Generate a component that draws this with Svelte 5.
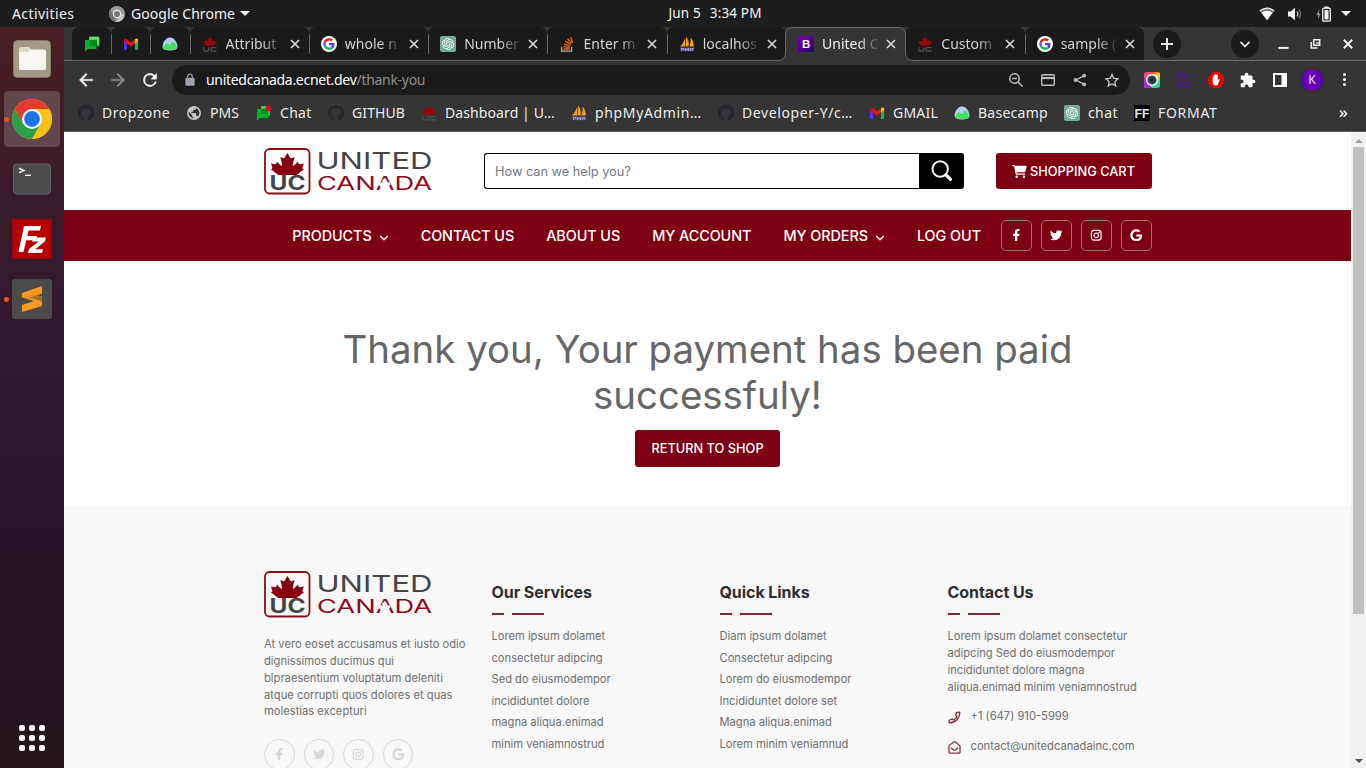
<script>
  const github =
    '<path fill="#24262f" d="M8 0C3.58 0 0 3.58 0 8c0 3.54 2.29 6.53 5.47 7.59.4.07.55-.17.55-.38 0-.19-.01-.82-.01-1.49-2.01.37-2.53-.49-2.69-.94-.09-.23-.48-.94-.82-1.13-.28-.15-.68-.52-.01-.53.63-.01 1.08.58 1.23.82.72 1.21 1.87.87 2.33.66.07-.52.28-.87.51-1.07-1.78-.2-3.64-.89-3.64-3.95 0-.87.31-1.59.82-2.15-.08-.2-.36-1.02.08-2.12 0 0 .67-.21 2.2.82.64-.18 1.32-.27 2-.27s1.36.09 2 .27c1.53-1.04 2.2-.82 2.2-.82.44 1.1.16 1.92.08 2.12.51.56.82 1.27.82 2.15 0 3.07-1.87 3.75-3.65 3.95.29.25.54.73.54 1.48 0 1.07-.01 1.93-.01 2.2 0 .21.15.46.55.38A8.01 8.01 0 0 0 16 8c0-4.42-3.58-8-8-8z"/>';
  const leaf =
    '256,0 298,80 316,85 356,62 328,192 346,202 401,139 416,172 429,179 487,167 467,234 472,252 489,259 384,352 128,352 23,259 40,252 45,234 25,167 83,179 96,172 111,139 166,202 184,192 156,62 196,85 214,80';

  // Each entry: [viewBox, svg markup]
  const icons = {
    chat: ['0 0 16 16', '<path fill="#35c759" d="M5 .8h10.2v9.500h-2V4H5z"/><path fill="#5be07a" d="M6 .8h9.200v7.700H13V3.600H6z"/><path fill="#00b32c" d="M1 4h11.500v9H4l-3 2.600z"/><path fill="#078a22" d="M5 4h7.500v6H5z"/>'],
    chatdot: ['0 0 16 16', '<path fill="#35c759" d="M5 1h9v9.500H5z"/><path fill="#00b32c" d="M1 4h11.500v9H4l-3 2.600z"/><path fill="#078a22" d="M5 4h6.500v5H5z"/><circle cx="12.800" cy="3.200" r="2.900" fill="#e40010"/>'],
    gmail: ['0 0 16 16', '<path fill="#5b2df5" d="M.9 4.200 4 6.500V14H2Q.9 14 .9 12.900z"/><path fill="#12b84a" d="M12 6.500 15.100 4.200v8.700Q15.100 14 14 14h-2z"/><path fill="#f01414" d="m4 3.300 4 3.100 4-3.100v4.200l-4 3-4-3z"/><path fill="#b40f16" d="M.9 4.200C.9 2.200 2.700 1.900 4 3.300v4.200L.9 5.200z"/><path fill="#ffd000" d="M12 3.300c1.300-1.400 3.100-1 3.100.9v1L12 7.500z"/>'],
    basecamp: ['0 0 16 16', '<path fill="#b8cdf5" d="M8 1.500c5 0 7.500 6.300 7.500 9.500 0 2.500-4 3.500-7.500 3.500S.5 13.500.5 11C.5 7.800 3 1.500 8 1.500z"/><path fill="#45e05a" d="M1 11.300c1.400-1.700 2.500-4.300 4-4.300 1.300 0 1.700 2 2.600 2 1.300 0 1.700-3.500 3.500-3.500 1.900 0 3.200 3.700 3.900 5.700-.2 2-3.700 2.800-7 2.800s-6.800-.7-7-2.700z"/>'],
    uc: ['0 0 16 16', `<g transform="translate(1 .5) scale(.0273 .026)"><polygon fill="#9d0408" points="${leaf}"/></g><path d="M1.700 11v3.200q0 .8.800.8h3.300q.8 0 .8-.8V11m8 .6H9.800q-.9 0-.9.800v1.800q0 .8.900.8h4.800" fill="none" stroke="#4c4c4c" stroke-width="1.300"/>`],
    google: ['0 0 64 64', '<circle cx="32" cy="32" r="32" fill="#fff"/><g transform="translate(9 9) scale(.96)"><path fill="#f01616" d="M24 9.500c3.500 0 6.700 1.200 9.200 3.600l6.900-6.900C35.900 2.400 30.500 0 24 0 14.600 0 6.500 5.400 2.600 13.200l8 6.200C12.400 13.700 17.700 9.500 24 9.500z"/><path fill="#5537ef" d="M47 24.600c0-1.600-.2-3.100-.4-4.600H24v9h12.900c-.6 3-2.300 5.500-4.800 7.200l7.700 6C44.400 38 47 31.900 47 24.600z"/><path fill="#8a2df0" d="M10.500 28.600a14.600 14.600 0 0 1 0-9.200l-8-6.200a24 24 0 0 0 0 21.600z"/><path fill="#09b94a" d="M24 48c6.500 0 11.900-2.100 15.900-5.800l-7.700-6c-2.200 1.500-4.900 2.300-8.200 2.300-6.300 0-11.600-4.200-13.500-9.900l-8 6.200C6.500 42.600 14.600 48 24 48z"/></g>'],
    openai: ['0 0 32 32', '<rect width="32" height="32" rx="4" fill="#74aa9c"/><g transform="translate(4 4)" fill="#fff"><path d="M22.2819 9.8211a5.9847 5.9847 0 0 0-.5157-4.9108 6.0462 6.0462 0 0 0-6.5098-2.9A6.0651 6.0651 0 0 0 4.9807 4.1818a5.9847 5.9847 0 0 0-3.9977 2.9 6.0462 6.0462 0 0 0 .7427 7.0966 5.98 5.98 0 0 0 .511 4.9107 6.051 6.051 0 0 0 6.5146 2.9001A5.9847 5.9847 0 0 0 13.2599 24a6.0557 6.0557 0 0 0 5.7718-4.2058 5.9894 5.9894 0 0 0 3.9977-2.9001 6.0557 6.0557 0 0 0-.7475-7.0729zm-9.022 12.6081a4.4755 4.4755 0 0 1-2.8764-1.0408l.1419-.0804 4.7783-2.7582a.7948.7948 0 0 0 .3927-.6813v-6.7369l2.02 1.1686a.071.071 0 0 1 .038.052v5.5826a4.504 4.504 0 0 1-4.4945 4.4944zm-9.6607-4.1254a4.4708 4.4708 0 0 1-.5346-3.0137l.142.0852 4.783 2.7582a.7712.7712 0 0 0 .7806 0l5.8428-3.3685v2.3324a.0804.0804 0 0 1-.0332.0615L9.74 19.9502a4.4992 4.4992 0 0 1-6.1408-1.6464zM2.3408 7.8956a4.485 4.485 0 0 1 2.3655-1.9728V11.6a.7664.7664 0 0 0 .3879.6765l5.8144 3.3543-2.0201 1.1685a.0757.0757 0 0 1-.071 0l-4.8303-2.7865A4.504 4.504 0 0 1 2.3408 7.872zm16.5963 3.8558L13.1038 8.364 15.1192 7.2a.0757.0757 0 0 1 .071 0l4.8303 2.7913a4.4944 4.4944 0 0 1-.6765 8.1042v-5.6772a.79.79 0 0 0-.407-.667zm2.0107-3.0231l-.142-.0852-4.7735-2.7818a.7759.7759 0 0 0-.7854 0L9.409 9.2297V6.8974a.0662.0662 0 0 1 .0284-.0615l4.8303-2.7866a4.4992 4.4992 0 0 1 6.6802 4.66zM8.3065 12.863l-2.02-1.1638a.0804.0804 0 0 1-.038-.0567V6.0742a4.4992 4.4992 0 0 1 7.3757-3.4537l-.142.0805L8.704 5.459a.7948.7948 0 0 0-.3927.6813zm1.0976-2.3654l2.602-1.4998 2.6069 1.4998v2.9994l-2.5974 1.4997-2.6067-1.4997Z"/></g>'],
    stack: ['0 0 16 16', '<path d="M2.600 10.800v4.400h10v-4.400" fill="none" stroke="#a9a9ad" stroke-width="1.300"/><path d="M4.500 13h6.200M4.500 10.700l6.200.6M5 8.100l6 1.700M6.300 5.200l5.400 3.100M8.600 2.700l4 4.700M11.700 1l1.900 5.900" stroke="#ef6a00" stroke-width="1.350"/>'],
    pma: ['0 0 16 16', '<path d="M6.300 1.500v9H.8C3.200 8.700 5 5.500 6.300 1.500z" fill="#e8a33a"/><path d="M7.300.5c2.200 3 2.900 6.600 2.300 10H6.800z" fill="#ff9a00"/><path d="M11.600 1.500c2.300 2.500 3.200 6 3.200 9h-4.300c1-3 1.500-5.700 1.100-9z" fill="#f6a51f"/><path d="M.5 11.500h15l-1.500 3.800H1.900z" fill="#57528c"/><path d="M2.500 15v-2.500h2.200v1.300M6.500 15v-2.600l1.500 1.600 1.500-1.600V15m2-0v-2.500h2.300V15" stroke="#b9b3d8" stroke-width=".8" fill="none"/>'],
    bootstrap: ['0 0 16 16', '<defs><linearGradient id="bsg" x2="1" y2="1"><stop stop-color="#7b00b5"/><stop offset="1" stop-color="#2a0060"/></linearGradient></defs><rect width="16" height="16" rx="1.500" fill="url(#bsg)"/><text x="8.100" y="12.200" text-anchor="middle" font-family="Liberation Sans, sans-serif" font-weight="700" font-size="11.500" fill="#fff">B</text>'],
    github: ['0 0 16 16', github],
    globe: ['0 0 24 24', '<path fill="#c3c5cb" d="M12 1.500A10.500 10.500 0 1 0 22.500 12 10.500 10.500 0 0 0 12 1.500zM11 19.800A7.900 7.900 0 0 1 4.200 10.300L9 15v1a2 2 0 0 0 2 2zm6.900-2.500A2 2 0 0 0 16 16h-1v-3a1 1 0 0 0-1-1H8v-2h2a1 1 0 0 0 1-1V7h2a2 2 0 0 0 2-2v-.4a8 8 0 0 1 2.900 12.700z"/>'],
    format: ['0 0 16 16', '<rect width="16" height="16" fill="#000"/><text x="8" y="13" text-anchor="middle" font-family="Liberation Sans, sans-serif" font-weight="700" font-size="13.500" textLength="15" lengthAdjust="spacingAndGlyphs" fill="#e8e8e8">FF</text>'],
    facebook: ['-96 0 512 512', '<path fill="currentColor" d="M279.140 288l14.220-92.660h-88.910v-60.130c0-25.350 12.420-50.060 52.240-50.060h40.420V6.260S260.430 0 225.360 0c-73.220 0-121.080 44.380-121.080 124.720v70.620H22.890V288h81.390v224h100.170V288z"/>'],
    twitter: ['0 0 512 512', '<path fill="currentColor" d="M459.370 151.716c.325 4.548.325 9.097.325 13.645 0 138.720-105.583 298.558-298.558 298.558-59.452 0-114.680-17.219-161.137-47.106 8.447.974 16.568 1.299 25.340 1.299 49.055 0 94.213-16.568 130.274-44.832-46.132-.975-84.792-31.188-98.112-72.772 6.498.974 12.995 1.624 19.818 1.624 9.421 0 18.843-1.300 27.614-3.573-48.081-9.747-84.143-51.980-84.143-102.985v-1.299c13.969 7.797 30.214 12.670 47.431 13.319-28.264-18.843-46.781-51.005-46.781-87.391 0-19.492 5.197-37.360 14.294-52.954 51.655 63.675 129.300 105.258 216.365 109.807-1.624-7.797-2.599-15.918-2.599-24.040 0-57.828 46.782-104.934 104.934-104.934 30.213 0 57.502 12.670 76.670 33.137 23.715-4.548 46.456-13.320 66.599-25.340-7.798 24.366-24.366 44.833-46.132 57.827 21.117-2.273 41.584-8.122 60.426-16.243-14.292 20.791-32.161 39.308-52.628 54.253z"/>'],
    instagram: ['0 0 16 16', '<rect x="1.800" y="1.800" width="12.400" height="12.400" rx="3.400" fill="none" stroke="currentColor" stroke-width="1.500"/><circle cx="8" cy="8" r="2.900" fill="none" stroke="currentColor" stroke-width="1.400"/><circle cx="11.700" cy="4.400" r=".9" fill="currentColor"/>'],
    gplus: ['-12 0 512 512', '<path fill="currentColor" d="M488 261.800C488 403.300 391.100 504 248 504 110.800 504 0 393.200 0 256S110.800 8 248 8c66.800 0 123 24.500 166.300 64.900l-67.500 64.900C258.500 52.600 94.300 116.600 94.300 256c0 86.500 69.100 156.600 153.700 156.600 98.200 0 135-70.400 140.800-106.900H248v-85.300h236.100c2.300 12.700 3.900 24.900 3.900 41.400z"/>'],
    cart: ['0 0 576 512', '<path fill="currentColor" d="M0 24C0 10.700 10.700 0 24 0H69.500c22 0 41.500 12.800 50.600 32h411c26.300 0 45.500 25 38.600 50.400l-41 152.300c-8.500 31.400-37 53.300-69.500 53.300H170.700l5.400 28.500c2.200 11.300 12.100 19.500 23.600 19.500H488c13.300 0 24 10.700 24 24s-10.700 24-24 24H199.700c-34.600 0-64.300-24.600-70.700-58.500L77.400 54.500c-.7-3.800-4-6.500-7.900-6.500H24C10.700 48 0 37.300 0 24zM128 464a48 48 0 1 1 96 0 48 48 0 1 1-96 0zm336-48a48 48 0 1 1 0 96 48 48 0 1 1 0-96z"/>'],
    zoom: ['0 0 16 16', '<circle cx="6.500" cy="6.500" r="4.700" fill="none" stroke="#bdbdbd" stroke-width="1.500"/><path d="M10 10l4.500 4.500M4.200 6.500h4.600" stroke="#bdbdbd" stroke-width="1.600"/>'],
    card: ['0 0 16 16', '<rect x="1.700" y="2.700" width="12.600" height="10.600" rx="1" fill="none" stroke="#bdbdbd" stroke-width="1.400"/><path d="M2 6h12" stroke="#bdbdbd" stroke-width="2.200"/>'],
    share: ['0 0 16 16', '<path d="M12.300 3.700 4 8l8.300 4.400" fill="none" stroke="#bdbdbd" stroke-width="1.300"/><g fill="#bdbdbd"><circle cx="12.200" cy="3.600" r="1.900"/><circle cx="3.600" cy="8" r="1.900"/><circle cx="12.200" cy="12.400" r="1.900"/></g>'],
    star: ['1.500 1 21 21', '<path fill="#c7c7c7" d="M22 9.240l-7.190-.62L12 2 9.190 8.630 2 9.240l5.460 4.730L5.820 21 12 17.270 18.180 21l-1.630-7.030L22 9.240zM12 15.400l-3.760 2.270 1-4.280-3.320-2.880 4.380-.38L12 6.100l1.710 4.040 4.380.38-3.320 2.880 1 4.280L12 15.400z"/>'],
    camera: ['0 0 16 16', '<defs><linearGradient id="cmg" x2="1" y2="1"><stop stop-color="#ff2ad0"/><stop offset=".35" stop-color="#ff6a20"/><stop offset=".55" stop-color="#ffd63c"/><stop offset=".75" stop-color="#3ee083"/><stop offset="1" stop-color="#16b8f0"/></linearGradient></defs><rect width="16" height="16" rx="2.500" fill="url(#cmg)"/><path d="M0 5v8.500Q0 16 2.500 16H8z" fill="#b024ee"/><circle cx="8" cy="8" r="5.300" fill="#34455a" stroke="#fff" stroke-width="1.400"/><circle cx="8" cy="8" r="2.500" fill="#1e2c3c"/>'],
    doc: ['0 0 16 16', '<path d="M8 14.500H2.200v-13H8l3.500 3.500v3M8 1.500V5h3.500M7.500 14.500h6a1.500 1.500 0 0 0 0-3.200 2.400 2.400 0 0 0-4.600-.5 1.900 1.900 0 0 0-1.400 3.700z" fill="none" stroke="#5213b1" stroke-width="1.100"/>'],
    adblock: ['0 0 16 16', '<path d="M4.700 0h6.600L16 4.700v6.600L11.300 16H4.700L0 11.300V4.700z" fill="#e60000"/><path d="M4.700 8.500V4.700q.7-.8 1.200 0V3q.7-.8 1.300 0v-.6q.7-.8 1.300 0V3q.7-.7 1.200 0v5.200l1-1.200q1-.5 1 .5L10 12.500q-.7 1-2.100 1-2.800 0-3.200-3z" fill="#fff"/>'],
    puzzle: ['1 0 23 23', '<path fill="#fff" d="M20.500 11H19V7c0-1.100-.9-2-2-2h-4V3.500C13 2.120 11.880 1 10.500 1S8 2.120 8 3.500V5H4c-1.100 0-1.990.9-1.990 2v3.800H3.500c1.490 0 2.700 1.210 2.700 2.700s-1.210 2.700-2.700 2.700H2V20c0 1.100.9 2 2 2h3.800v-1.500c0-1.490 1.210-2.700 2.700-2.700 1.490 0 2.700 1.210 2.700 2.700V22H17c1.100 0 2-.9 2-2v-4h1.500c1.380 0 2.500-1.120 2.500-2.500S21.880 11 20.500 11z"/>'],
    panel: ['0 0 16 16', '<path fill="#fff" fill-rule="evenodd" d="M1 1h14v14H1zm2 2v10h6.500V3z"/>'],
    back: ['0 0 24 24', '<path fill="currentColor" d="M20 11H7.830l5.590-5.590L12 4l-8 8 8 8 1.410-1.410L7.830 13H20v-2z" stroke="currentColor" stroke-width=".4"/>'],
    reload: ['0 0 24 24', '<path fill="currentColor" stroke="currentColor" stroke-width=".4" d="M17.650 6.350A7.958 7.958 0 0 0 12 4a8 8 0 1 0 7.730 10h-2.080A6 6 0 1 1 12 6c1.660 0 3.140.69 4.220 1.780L13 11h7V4l-2.350 2.350z"/>'],
    lock: ['0 0 24 24', '<path fill="#9da0a8" d="M18 8h-1V6c0-2.760-2.240-5-5-5S7 3.240 7 6v2H6c-1.100 0-2 .9-2 2v10c0 1.100.9 2 2 2h12c1.100 0 2-.9 2-2V10c0-1.100-.9-2-2-2zM8.900 8V6a3.100 3.100 0 0 1 6.200 0v2z"/>'],
    x: ['0 0 16 16', '<path d="M4 4l8 8m0-8l-8 8" stroke="currentColor" stroke-width="1.700"/>'],
    phone: ['0 0 16 16', '<path d="M10.600 1.600l3.800-.2c.5 7-5.200 13.400-12.700 13.200l-.3-3.200 3.800-1.600 1.400 1.500c2.100-1 3.500-2.500 4.400-4.500L9.500 5.200z" fill="none" stroke="#85303c" stroke-width="1.600" stroke-linejoin="round"/>'],
    mail: ['0 0 16 16', '<path d="M1.200 6.200Q1.200 5.500 7 1.300q1-.8 2 0 5.800 4.200 5.800 4.900v7.600q0 1-1 1H2.200q-1 0-1-1z" fill="none" stroke="#85303c" stroke-width="1.600"/><path d="M3.500 8.200l3.500 2.900q1 .7 2 0l3.500-2.900" fill="none" stroke="#85303c" stroke-width="1.600"/>'],
    // dock
    files: ['0 0 40 40', '<rect x="1.500" y="1.500" width="37" height="37" rx="4" fill="#a39b88" stroke="#817a69"/><path d="M7 10q0-2 2-2h8l3 3h11q2 0 2 2v6H7z" fill="#ded9cc"/><path d="M7 14q0-1 1-1h8l3-2.500h13q2 0 2 2V29q0 2-2 2H9q-2 0-2-2z" fill="#f8f7f4"/>'],
    chrome: ['0 0 40 40', '<circle cx="20" cy="20" r="20" fill="#fbc116"/><path d="M20 10h17.300A20 20 0 0 0 2.700 10l8.600 15z" fill="#e33b2e"/><path d="M2.700 10A20 20 0 0 0 20 40l8.700-15-8.700 5-8.700-5z" fill="#2c9f48"/><path d="M28.700 25 20 40A20 20 0 0 0 37.300 10H20z" fill="#fbc116"/><circle cx="20" cy="20" r="10" fill="#fff"/><circle cx="20" cy="20" r="7.900" fill="#1b74e8"/>'],
    terminal: ['0 0 40 40', '<rect x="1.700" y="5" width="36.600" height="30" rx="3" fill="#4b4b4b" stroke="#686868"/><path d="M7 9.200l5 2.300-5 2.300" fill="none" stroke="#ececec" stroke-width="1.500"/><path d="M13 16.300h6" stroke="#ececec" stroke-width="1.400"/>'],
    filezilla: ['0 0 40 40', '<rect x="1" y="1" width="38" height="38" fill="#b80000" stroke="#b00000" stroke-width="2" stroke-dasharray="2.500 1.250"/><path d="M12 7h17l-1 4.500H16.500l-1.200 5.500H25l-1 4.300h-9.700L11.500 33H6.500zM21 18.500h13l-1 3.800-9.800 7.900H31l-1 3.800H16l1-3.900 9.600-7.700H20z" fill="#fff"/>'],
    sublime: ['0 0 40 40', '<rect width="40" height="40" rx="3" fill="#4b4b4b"/><path d="M10 14 30 7v7.500l-12 4 12 4V27l-20 6v-7l12-4-12-3.500z" fill="#ff9a1f"/><path d="M10 18.500l20 4V17l-9-1.500z" fill="#e38512" opacity=".6"/>'],
  };

  const pinned = ['chat', 'gmail', 'basecamp'];
  const tabs = [
    { icon: 'uc', title: 'Attribut' },
    { icon: 'google', title: 'whole n' },
    { icon: 'openai', title: 'Number' },
    { icon: 'stack', title: 'Enter m' },
    { icon: 'pma', title: 'localhos' },
    { icon: 'bootstrap', title: 'United C', active: true },
    { icon: 'uc', title: 'Custom' },
    { icon: 'google', title: 'sample (' },
  ];
  const bookmarks = [
    { icon: 'github', title: 'Dropzone', w: 68, ls: 0.5 },
    { icon: 'globe', title: 'PMS', w: 30, ls: 0.1 },
    { icon: 'chatdot', title: 'Chat', w: 32, ls: 0.3 },
    { icon: 'github', title: 'GITHUB', w: 53, ls: 0.1 },
    { icon: 'uc', title: 'Dashboard | U…', w: 110, ls: 0.1 },
    { icon: 'pma', title: 'phpMyAdmin…', w: 107, ls: 0.65 },
    { icon: 'github', title: 'Developer-Y/c…', w: 111, ls: 0.6 },
    { icon: 'gmail', title: 'GMAIL', w: 45, ls: 0.2 },
    { icon: 'basecamp', title: 'Basecamp', w: 70, ls: 0.25 },
    { icon: 'openai', title: 'chat', w: 30, ls: 0.4 },
    { icon: 'format', title: 'FORMAT', w: 60, ls: 0.7 },
  ];
  const dock = [
    { icon: 'files' },
    { icon: 'chrome', running: true, focused: true },
    { icon: 'terminal' },
    { icon: 'filezilla' },
    { icon: 'sublime', running: true },
  ];
  const nav = [
    { label: 'PRODUCTS', menu: true },
    { label: 'CONTACT US' },
    { label: 'ABOUT US' },
    { label: 'MY ACCOUNT' },
    { label: 'MY ORDERS', menu: true },
    { label: 'LOG OUT' },
  ];
  const social = ['facebook', 'twitter', 'instagram', 'gplus'];
  const about = ['At vero eoset accusamus et iusto odio', 'dignissimos ducimus qui', 'blpraesentium voluptatum deleniti', 'atque corrupti quos dolores et quas', 'molestias excepturi'];
  const lists = [
    { title: 'Our Services', items: ['Lorem ipsum dolamet', 'consectetur adipcing', 'Sed do eiusmodempor', 'incididuntet dolore', 'magna aliqua.enimad', 'minim veniamnostrud'] },
    { title: 'Quick Links', items: ['Diam ipsum dolamet', 'Consectetur adipcing', 'Lorem do eiusmodempor', 'Incididuntet dolore set', 'Magna aliqua.enimad', 'Lorem minim veniamnud'] },
  ];
  const contact = ['Lorem ipsum dolamet consectetur', 'adipcing Sed do eiusmodempor', 'incididuntet dolore magna', 'aliqua.enimad minim veniamnostrud'];
</script>

{#snippet icon(name, cls = '')}
  <svg class="icon {cls}" viewBox={icons[name][0]} aria-hidden="true">{@html icons[name][1]}</svg>
{/snippet}

{#snippet logo(bg)}
  <svg class="logo" viewBox="0 0 168 47" aria-label="United Canada">
    <rect x="1" y="1" width="44.500" height="44.500" rx="4.500" fill={bg} stroke="#8c0c1b" stroke-width="1.800" />
    <g transform="translate(5.200 5) scale(.0712 .0625)"><polygon points={leaf} fill="#86000f" /></g>
    <g font-family="Inter, sans-serif">
      <text x="5.500" y="41.500" font-size="19.500" font-weight="700" fill="#454547" textLength="36" lengthAdjust="spacingAndGlyphs">UC</text>
      <text x="52.500" y="21.200" font-size="23.500" font-weight="400" fill="#454547" textLength="116" lengthAdjust="spacingAndGlyphs">UNITED</text>
      <text x="53" y="41.500" font-size="18.500" font-weight="400" fill="#8c0c1b" textLength="115" lengthAdjust="spacingAndGlyphs">CANADA</text>
    </g>
    <g transform="translate(114 30) scale(.025 .026)"><polygon points={leaf} fill={bg} stroke="#ddd" stroke-width="16" /></g>
  </svg>
{/snippet}

<div class="desktop">
  <header class="topbar">
    <div class="top-left">
      <span class="activities">Activities</span>
      <svg class="mono" viewBox="0 0 16 16"><circle cx="8" cy="8" r="8" fill="#9a9a9a" /><path d="M8 8H15.500A8 8 0 0 1 7 16l4-6z" fill="#c8c8c8" /><path d="M1.500 4 5 10l3 1-3 4.500A8 8 0 0 1 1.500 4z" fill="#6f6f6f" /><circle cx="8" cy="8" r="4.200" fill="#f1f1f1" /><circle cx="8" cy="8" r="3.100" fill="#777" /></svg>
      <span class="appname">Google Chrome</span>
      <i class="caret"></i>
    </div>
    <div class="clock"><span>Jun 5</span><span>3:34 PM</span></div>
    <div class="tray">
      <svg width="16" height="14" viewBox="0 0 16 14"><path d="M8 12.500.8 4Q8-1.800 15.200 4z" fill="#777" /><path d="M.8 4Q8-1.800 15.200 4" fill="none" stroke="#f2f2f2" stroke-width="1.300" /><path d="M8 13.200 2.400 5.700Q8 2 13.600 5.700z" fill="#fff" /></svg>
      <svg width="16" height="14" viewBox="0 0 16 14"><path d="M1 4.500h2.500L8 .8v12.400L3.500 9.500H1z" fill="#f2f2f2" /><path d="M10 4.500q1.800 2.500 0 5" fill="none" stroke="#ccc" stroke-width="1.200" /><path d="M12 2.500q3 4.500 0 9" fill="none" stroke="#777" stroke-width="1.200" /></svg>
      <svg width="16" height="16" viewBox="0 0 16 16"><path d="M4.500 3 1.500 9h1.800L3 13.500 5.500 7.500H3.800z" fill="#999" /><path d="M9.500.5h4v2h-4z" fill="#f2f2f2" /><rect x="7.700" y="2.200" width="7.600" height="13" rx="1" fill="none" stroke="#f2f2f2" stroke-width="1.300" /><path d="M9.500 4h4v9.500h-4z" fill="#f2f2f2" /></svg>
      <i class="caret"></i>
    </div>
  </header>

  <div class="workspace">
    <aside class="dock">
      {#each dock as d}
        <div class="slot" class:focused={d.focused}>
          {#if d.running}<i class="dot"></i>{/if}
          {@render icon(d.icon, 'app')}
        </div>
      {/each}
      <div class="apps">{#each Array(9) as _}<i></i>{/each}</div>
    </aside>

    <main class="browser">
      <div class="tabstrip">
        {#each pinned as p}
          <div class="tab pin">{@render icon(p)}</div>
        {/each}
        {#each tabs as t, i}
          <div class="tab" class:active={t.active} class:nosep={t.active || tabs[i + 1]?.active || i === tabs.length - 1}>
            {#if t.active}
              <svg class="shape" viewBox="0 0 137 34"><path d="M0 33.500Q8.500 33.500 8.500 26V8Q8.500.5 16 .5H121Q128.500.5 128.500 8V26Q128.500 33.500 137 33.500V35H0z" fill="#353535" /><path d="M0 33.500Q8.500 33.500 8.500 26V8Q8.500.5 16 .5H121Q128.500.5 128.500 8V26Q128.500 33.500 137 33.500" fill="none" stroke="#6a6a6a" /></svg>
            {/if}
            {@render icon(t.icon)}
            <span class="title">{t.title}</span>
            {@render icon('x', 'close')}
          </div>
        {/each}
        <div class="round plus"><svg viewBox="0 0 28 28"><path d="M14 8v12M8 14h12" stroke="#e6e6e6" stroke-width="2" /></svg></div>
        <div class="controls">
          <div class="round"><svg viewBox="0 0 28 28"><path d="M9.500 11.800l4.500 4.500 4.500-4.500" fill="none" stroke="#dcdcdc" stroke-width="1.900" /></svg></div>
          <svg class="wc" viewBox="0 0 12 12"><path d="M.5 9.900h10" stroke="#f0f0f0" stroke-width="2" /></svg>
          <svg class="wc" viewBox="0 0 12 12"><path d="M3.700 1.700h6v5.500h-6zM1.200 4v6H7.500" fill="none" stroke="#f0f0f0" stroke-width="1.500" /><path d="M6 4h3v2H6z" fill="#aaa" /></svg>
          <svg class="wc" viewBox="0 0 12 12"><path d="M1.800 1.800l8.400 8.400m0-8.400-8.400 8.400" stroke="#f0f0f0" stroke-width="2" /></svg>
        </div>
      </div>

      <div class="toolbar">
        <div class="navbtns">
          {@render icon('back')}
          {@render icon('back', 'forward')}
          {@render icon('reload')}
        </div>
        <div class="omnibox">
          {@render icon('lock', 'lock')}
          <span class="url">unitedcanada.ecnet.dev<em>/thank-you</em></span>
          <div class="actions">
            {#each ['zoom', 'card', 'share', 'star'] as a}{@render icon(a)}{/each}
          </div>
        </div>
        <div class="exts">
          {#each ['camera', 'doc', 'adblock', 'puzzle', 'panel'] as e}{@render icon(e)}{/each}
          <span class="avatar">K</span>
          <span class="dots"><i></i><i></i><i></i></span>
        </div>
      </div>

      <div class="bookmarks">
        {#each bookmarks as b}
          <div class="bm">{@render icon(b.icon)}<span style:width="{b.w}px" style:letter-spacing="{b.ls}px">{b.title}</span></div>
        {/each}
        <span class="more">»</span>
      </div>

      <div class="viewport">
        <div class="site">
          <div class="head">
            {@render logo('#fff')}
            <div class="search">
              <span class="input">How can we help you?</span>
              <div class="go"><svg viewBox="0 0 22 22"><circle cx="9.200" cy="9" r="7.700" fill="none" stroke="#f3f3f3" stroke-width="2" /><path d="M15 14.800l4.500 4.500" stroke="#fff" stroke-width="3.300" stroke-linecap="round" /></svg></div>
            </div>
            <div class="btn cart">{@render icon('cart', 'carticon')}<span>SHOPPING CART</span></div>
          </div>
          <nav class="nav">
            <div class="links">
              {#each nav as n}
                <span class="link">{n.label}{#if n.menu}<svg viewBox="0 0 10 6"><path d="M1.200 1l3.800 3.700L8.800 1" fill="none" stroke="#fff" stroke-width="1.400" /></svg>{/if}</span>
              {/each}
            </div>
            <div class="socials">
              {#each social as s}<span class="sq">{@render icon(s)}</span>{/each}
            </div>
          </nav>
          <section class="thanks">
            <h1>Thank you, Your payment has been paid<br />successfuly!</h1>
            <div class="btn ret">RETURN TO SHOP</div>
          </section>
          <footer class="foot">
            <div class="col first">
              {@render logo('#f8f8f8')}
              <p>{#each about as l}{l}<br />{/each}</p>
              <div class="circles">{#each social as s}<span>{@render icon(s)}</span>{/each}</div>
            </div>
            {#each lists as l}
              <div class="col">
                <h3>{l.title}</h3>
                <div class="rule"><i></i><i></i></div>
                <ul>{#each l.items as it}<li>{it}</li>{/each}</ul>
              </div>
            {/each}
            <div class="col">
              <h3>Contact Us</h3>
              <div class="rule"><i></i><i></i></div>
              <p class="ctext">{#each contact as l}{l}<br />{/each}</p>
              <div class="crow">{@render icon('phone')}<span>+1 (647) 910-5999</span></div>
              <div class="crow">{@render icon('mail')}<span>contact@unitedcanadainc.com</span></div>
            </div>
          </footer>
        </div>
        <div class="scrollbar">
          <i class="up"></i>
          <i class="thumb"></i>
          <i class="down"></i>
        </div>
      </div>
    </main>
  </div>
</div>

<style>
  :global(body) { margin: 0; overflow: hidden; }
  .desktop { width: 1366px; height: 768px; display: flex; flex-direction: column; overflow: hidden; font-family: 'Noto Sans', 'Open Sans', sans-serif; }
  .desktop :global(*) { box-sizing: border-box; }
  .icon { width: 16px; height: 16px; flex: none; display: block; }

  .topbar { height: 27px; flex: none; background: #1d1d1d; color: #f2f2f2; display: flex; align-items: center; font-size: 14px; line-height: 27px; }
  .top-left { width: 655px; display: flex; align-items: center; padding-left: 12px; }
  .activities { width: 63px; letter-spacing: .4px; }
  .mono { width: 16px; height: 16px; margin: 0 6px 0 34px; }
  .appname { width: 104px; white-space: nowrap; letter-spacing: .05px; }
  .caret { border: 5px solid transparent; border-top-color: #f2f2f2; border-bottom: 0; margin-left: 5px; }
  .clock { width: 120px; display: flex; justify-content: center; gap: 9px; font-size: 13.500px; letter-spacing: .15px; white-space: nowrap; }
  .tray { flex: 1; display: flex; justify-content: flex-end; align-items: center; gap: 12px; padding-right: 15px; }
  .tray .caret { margin-left: -2px; }

  .workspace { flex: 1; display: flex; min-height: 0; }
  .dock { width: 64px; flex: none; padding: 4px 4px 17px; display: flex; flex-direction: column; align-items: center; gap: 4px; background: linear-gradient(#481f22, #3c1b29 20%, #30192f 42%, #271627 70%, #22151a); }
  .slot { width: 56px; height: 56px; border-radius: 4px; display: flex; align-items: center; justify-content: center; position: relative; }
  .slot.focused { background: #62474f; }
  .dock :global(.app) { width: 40px; height: 40px; }
  .dot { position: absolute; left: 0; top: 26px; width: 5px; height: 5px; border-radius: 50%; background: #f0541e; }
  .apps { margin-top: auto; display: grid; grid-template-columns: repeat(3, 6px); gap: 4px; }
  .apps i { height: 6px; border-radius: 2px; background: #f4f2f2; }

  .browser { flex: 1; min-width: 0; display: flex; flex-direction: column; background: #353535; }
  .tabstrip { height: 34px; flex: none; display: flex; align-items: center; padding-left: 8px; border-bottom: 1px solid #6a6a6a; }
  .tab { width: 119.300px; height: 33px; display: flex; align-items: center; padding-left: 12px; background: #1a1a1a; border-radius: 7px 7px 0 0; position: relative; color: #d2d2d2; font-size: 14px; flex: none; }
  .tab::after { content: ''; position: absolute; right: -1px; top: 7px; width: 1px; height: 20px; background: #666; z-index: 1; }
  .tab.nosep::after { display: none; }
  .tab.pin { width: 39.200px; }
  .tab.active { background: none; color: #efefef; z-index: 1; }
  .tab > :global(*) { position: relative; }
  .tab .shape { position: absolute; left: -9px; top: 0; width: 137px; height: 34px; }
  .title { width: 58px; margin-left: 8px; white-space: nowrap; -webkit-mask: linear-gradient(90deg, #000 62%, transparent); mask: linear-gradient(90deg, #000 62%, transparent); }
  .tab :global(.close) { margin-left: 3px; color: #d8d8d8; }
  .round { width: 28px; height: 28px; border-radius: 50%; background: #1a1a1a; flex: none; }
  .round svg { display: block; }
  .plus { margin-left: 9px; }
  .controls { margin-left: auto; display: flex; align-items: center; gap: 20px; padding-right: 12px; }
  .controls .round { margin-right: -1px; }
  .wc { width: 12px; height: 12px; }

  .toolbar { height: 37px; flex: none; display: flex; align-items: center; }
  .navbtns { display: flex; gap: 12px; padding-left: 12px; width: 108px; color: #f4f4f4; }
  .navbtns :global(.icon) { width: 20px; height: 20px; }
  .navbtns :global(.forward) { transform: scaleX(-1); color: #8b8b8b; }
  .omnibox { width: 958px; height: 30px; border-radius: 15px; background: #1a1a1a; display: flex; align-items: center; padding: 0 10px 0 11px; }
  .omnibox :global(.lock) { width: 14px; height: 14px; }
  .url { margin-left: 9px; color: #fff; font-size: 14px; letter-spacing: -.3px; }
  .url em { font-style: normal; color: #8f8f8f; }
  .actions { margin-left: auto; display: flex; gap: 16px; }
  .exts { display: flex; align-items: center; gap: 16px; padding-left: 14px; }
  .avatar { width: 22px; height: 22px; border-radius: 50%; background: #6200b3; color: #f0e8f8; font-size: 12px; line-height: 22px; text-align: center; margin: 0 -3px; }
  .dots { width: 16px; display: flex; flex-direction: column; align-items: center; gap: 2px; }
  .dots i { width: 3px; height: 3px; border-radius: 50%; background: #fff; }

  .bookmarks { height: 34px; flex: none; display: flex; align-items: center; gap: 16px; padding: 0 18px 4px 14px; border-bottom: 1px solid #5b5b5b; color: #ececec; font-size: 14px; }
  .bm { display: flex; align-items: center; gap: 8px; white-space: nowrap; }
  .more { margin-left: auto; font-size: 17px; line-height: 20px; font-weight: 500; padding-bottom: 2px; }

  .viewport { flex: 1; min-height: 0; display: flex; font-family: Inter, sans-serif; }
  .site { flex: 1; background: #fff; display: flex; flex-direction: column; overflow: hidden; }
  .head { height: 78px; flex: none; padding: 0 199px 0 200px; display: flex; align-items: center; }
  .logo { width: 168px; height: 47px; display: block; flex: none; overflow: visible; }
  .search { width: 480px; height: 36px; margin: 0 32px 0 52px; display: flex; }
  .input { flex: 1; border: 1px solid #000; border-right: 0; border-radius: 3px 0 0 3px; padding-left: 10px; color: #737b84; font-size: 12.800px; line-height: 35px; letter-spacing: -.03px; }
  .go { width: 45px; background: #000; border-radius: 0 3px 3px 0; display: flex; align-items: center; justify-content: center; }
  .go svg { width: 22px; height: 22px; }
  .btn { background: #7c0011; color: #fff; border-radius: 3px; font-size: 12.800px; font-weight: 500; display: flex; align-items: center; justify-content: center; }
  .cart { width: 156px; height: 36px; gap: 3px; white-space: nowrap; padding-right: 1px; }
  .cart :global(.carticon) { width: 15px; height: 13px; }
  .nav { height: 51px; flex: none; background: #7c0011; color: #fff; display: flex; justify-content: flex-end; align-items: center; padding-right: 199px; }
  .links { display: flex; gap: 32px; font-size: 14.400px; font-weight: 500; white-space: nowrap; letter-spacing: -.055px; }
  .link svg { width: 10px; height: 6px; margin-left: 7px; }
  .socials { display: flex; gap: 9px; margin-left: 20px; }
  .sq { width: 31px; height: 31px; border: 1px solid #a07279; border-radius: 5px; display: flex; align-items: center; justify-content: center; padding-bottom: 1px; }
  .sq :global(.icon) { width: 12.500px; height: 12.500px; }
  .thanks { height: 246px; flex: none; padding-top: 65px; display: flex; flex-direction: column; align-items: center; }
  h1 { margin: 0; font-size: 38.400px; line-height: 46px; font-weight: 400; color: #666; text-align: center; white-space: nowrap; }
  .ret { width: 145px; height: 37px; margin-top: 12px; }
  .foot { flex: 1; min-height: 0; background: #f8f8f8; padding: 0 0 0 200px; display: flex; color: #6f6f6f; font-size: 11.200px; white-space: nowrap; }
  .col { width: 228px; flex: none; padding-top: 76px; }
  .col.first { padding-top: 64px; width: 227.500px; }
  .foot p { margin: 18.300px 0 0; line-height: 16.800px; }
  .circles { display: flex; gap: 9px; margin-top: 18.700px; color: #d6d6d6; }
  .circles span { width: 30.600px; height: 30.600px; border: 1px solid #d6d6d6; border-radius: 50%; display: flex; align-items: center; justify-content: center; padding-bottom: 1px; }
  .circles :global(.icon) { width: 12.500px; height: 12.500px; }
  h3 { margin: 0; font-size: 16px; line-height: 19px; font-weight: 700; letter-spacing: -.06px; color: #2d2d2f; }
  .rule { display: flex; gap: 8px; margin-top: 11px; }
  .rule i { width: 12px; height: 2px; background: #7c2631; }
  .rule i + i { width: 32px; }
  ul { list-style: none; margin: 11px 0 0; padding: 0; }
  li { line-height: 21.600px; letter-spacing: -.02px; }
  .foot .ctext { margin-top: 13.300px; letter-spacing: -.02px; }
  .crow { display: flex; gap: 10px; height: 30px; align-items: flex-start; line-height: 14px; padding-top: 2px; }
  .ctext + .crow { margin-top: 11.700px; }
  .crow :global(.icon) { width: 13px; height: 13px; margin-top: 1.500px; }
  .scrollbar { width: 15px; background: #f1f1f1; display: flex; flex-direction: column; align-items: center; padding: 7px 0 5px; }
  .up { border: 4px solid transparent; border-bottom-color: #a3a3a3; border-top: 0; }
  .thumb { width: 11px; height: 467px; margin-top: 4px; background: #c1c1c1; }
  .down { margin-top: auto; border: 4px solid transparent; border-top-color: #505050; border-bottom: 0; }
</style>
